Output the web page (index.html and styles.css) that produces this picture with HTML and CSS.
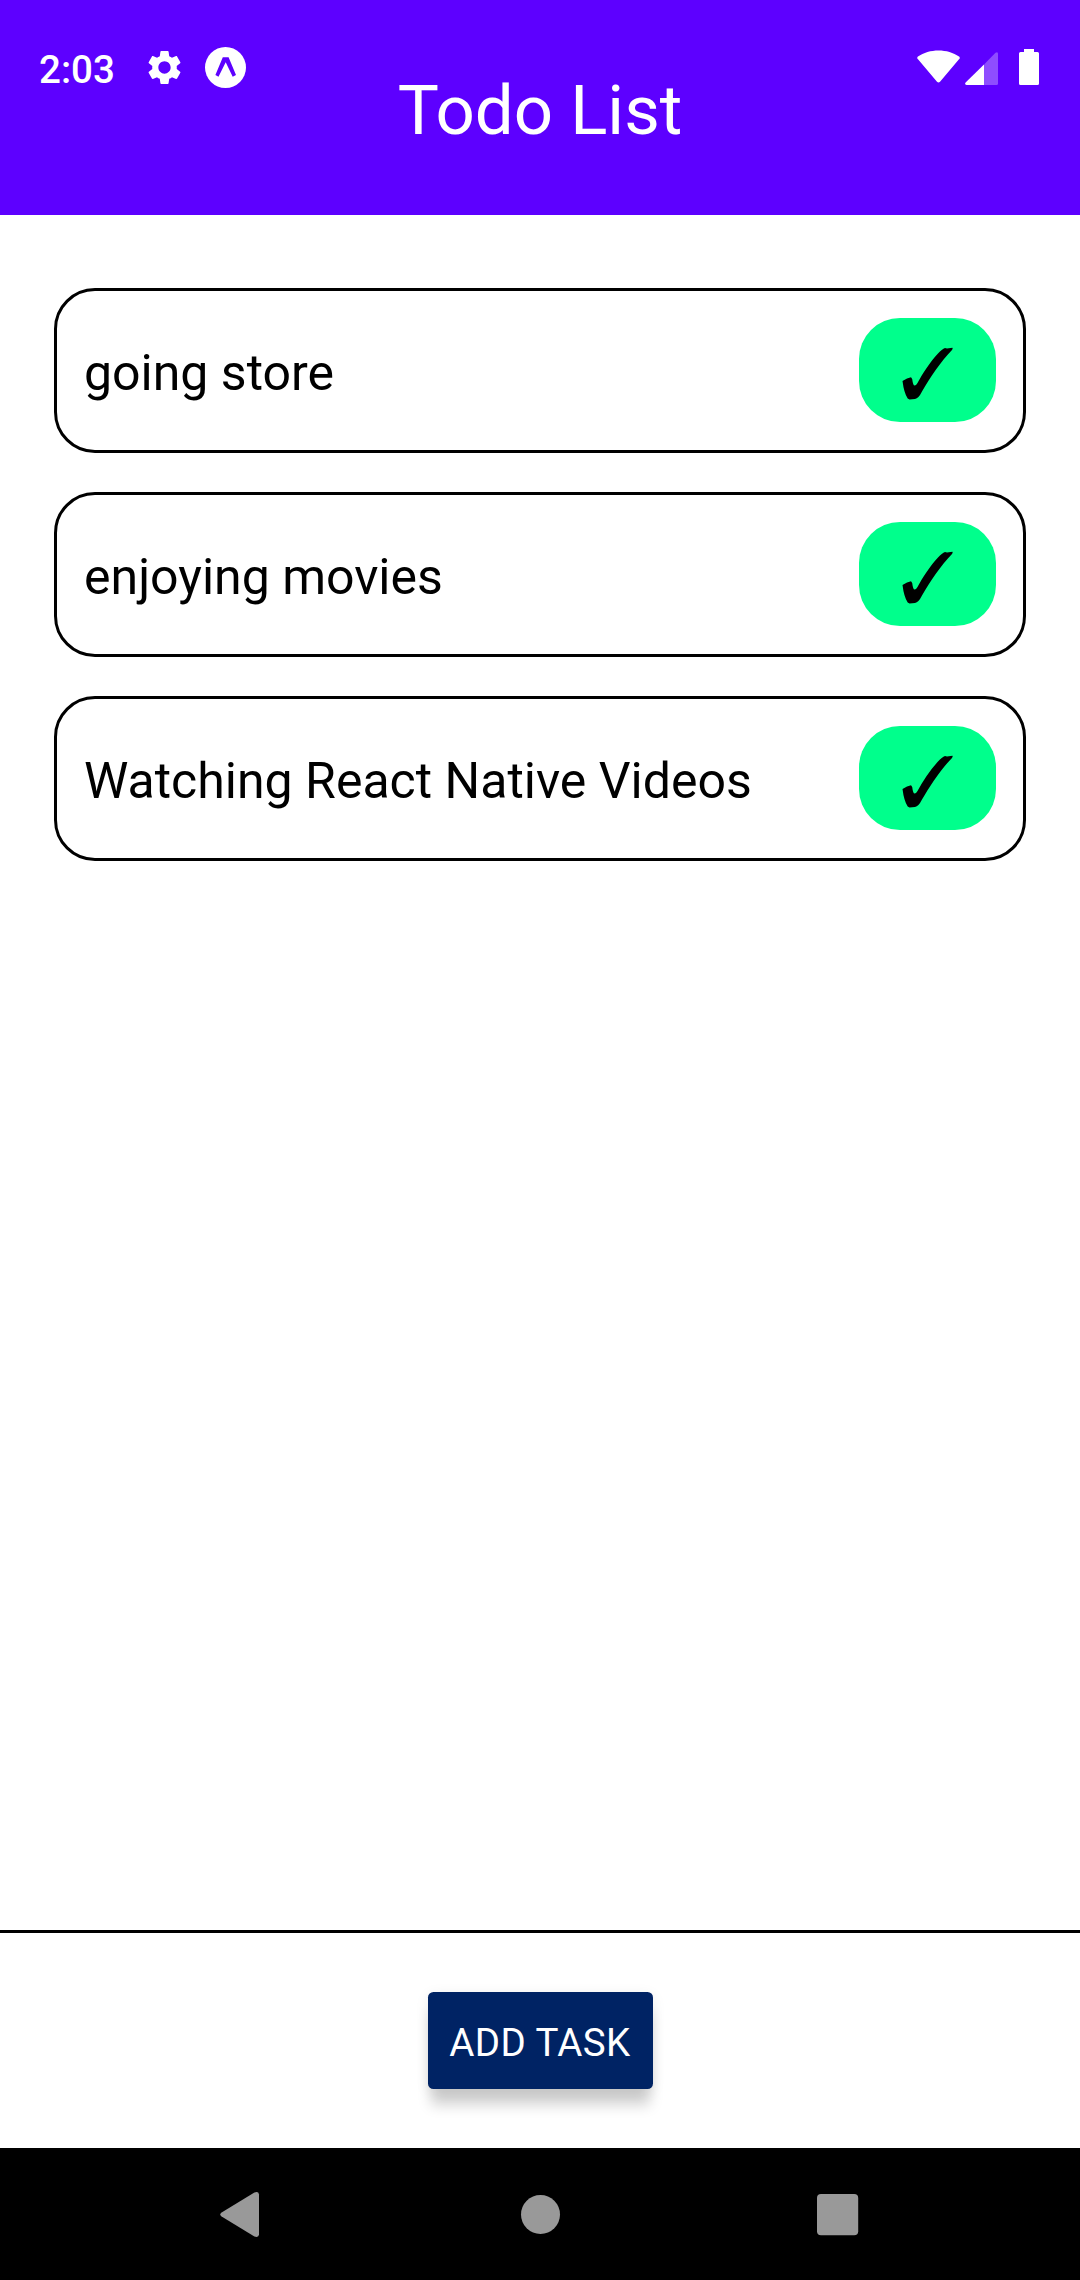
FILE: index.html
```html
<!DOCTYPE html>
<html lang="en">
<head>
<meta charset="utf-8">
<title>Todo List</title>
<link rel="stylesheet" href="styles.css">
</head>
<body>
<svg width="0" height="0" class="defs" aria-hidden="true">
  <symbol id="check" viewBox="0 0 52 54">
    <path d="M0.5 34 L5 31.5 L9 30.3 L10.2 32 Q11 38.5 12.6 38.6 Q14 38.6 15.5 36 C21 26 28 15 36 6.5 Q40 2 43 1 L45 1.6 L50.5 0.8 Q51 1.5 50 3 C39 14 28 31 20 44.5 Q16.5 51.5 13 52 L7.5 52.5 L5.7 51.6 Q2 46 0.5 34Z"/>
  </symbol>
</svg>
<header class="header">
  <div class="status">
    <div class="status-left">
      <span class="clock">2:03</span>
      <svg class="gear" viewBox="0 0 24 24"><path d="M19.14 12.94c.04-.3.06-.61.06-.94 0-.32-.02-.64-.07-.94l2.03-1.58c.18-.14.23-.41.12-.61l-1.92-3.32c-.12-.22-.37-.29-.59-.22l-2.39.96c-.5-.38-1.03-.7-1.62-.94l-.36-2.54c-.04-.24-.24-.41-.48-.41h-3.84c-.24 0-.43.17-.47.41l-.36 2.54c-.59.24-1.13.57-1.62.94l-2.39-.96c-.22-.08-.47 0-.59.22L2.74 8.87c-.12.21-.08.47.12.61l2.03 1.58c-.05.3-.09.63-.09.94s.02.64.07.94l-2.03 1.58c-.18.14-.23.41-.12.61l1.92 3.32c.12.22.37.29.59.22l2.39-.96c.5.38 1.03.7 1.62.94l.36 2.54c.05.24.24.41.48.41h3.84c.24 0 .44-.17.47-.41l.36-2.54c.59-.24 1.13-.56 1.62-.94l2.39.96c.22.08.47 0 .59-.22l1.92-3.32c.12-.22.07-.47-.12-.61l-2.01-1.58zM12 15.6c-1.98 0-3.6-1.62-3.6-3.6s1.62-3.6 3.6-3.6 3.6 1.62 3.6 3.6-1.62 3.6-3.6 3.6z"/></svg>
      <svg class="expo" viewBox="0 0 41 41"><circle cx="20.5" cy="20.5" r="20.5"/><path class="mark" d="M17.8 10.3H23.6L31 28L27.7 29.7L20.7 15.3L13.5 29.7L10.4 28Z"/></svg>
    </div>
    <div class="status-right">
      <svg class="wifi" viewBox="0 0 43 33"><path d="M1 9.3Q-.5 7.8 1 6.6C12-1.6 31-1.6 42 6.6Q43.5 7.8 42 9.3L23 31.8Q21.5 33.4 20 31.8Z"/></svg>
      <svg class="signal" viewBox="0 0 33 33"><path class="dim" d="M19 12.5L30.5 .8Q33 -.8 33 2V31.5Q33 33 31.5 33H19Z"/><path d="M19 12.5V33H1.5Q-.8 32.5 .6 30.6Z"/></svg>
      <svg class="battery" viewBox="0 0 20 36"><path d="M5 0H15V3H18.5Q20 3 20 4.5V34.5Q20 36 18.5 36H1.5Q0 36 0 34.5V4.5Q0 3 1.5 3H5Z"/></svg>
    </div>
  </div>
  <h1 class="title">Todo List</h1>
</header>
<main class="list">
  <div class="task"><span class="task-name">going store</span><button class="done" aria-label="Done"><svg class="check"><use href="#check"/></svg></button></div>
  <div class="task"><span class="task-name">enjoying movies</span><button class="done" aria-label="Done"><svg class="check"><use href="#check"/></svg></button></div>
  <div class="task"><span class="task-name">Watching React Native Videos</span><button class="done" aria-label="Done"><svg class="check"><use href="#check"/></svg></button></div>
</main>
<footer class="footer"><button class="add">ADD TASK</button></footer>
<nav class="nav">
  <svg class="nav-icon" viewBox="0 0 46 46"><path d="M1.6 20.5L34 .7Q38.5 -1.3 39 2.5V42.5Q38.5 46.3 34 44.3L1.6 24.5Q-1.1 22.5 1.6 20.5Z"/></svg>
  <svg class="nav-icon" viewBox="0 0 46 46"><circle cx="22.5" cy="22.5" r="19.5"/></svg>
  <svg class="nav-icon" viewBox="0 0 46 46"><rect x="2" y="2" width="41.2" height="41.2" rx="4"/></svg>
</nav>
</body>
</html>
```
FILE: styles.css
```css
* { box-sizing: border-box; }
body {
  margin: 0;
  height: 2280px;
  display: flex;
  flex-direction: column;
  background: #fff;
  font-family: Roboto, "Liberation Sans", sans-serif;
  color: #000;
}
svg { display: block; fill: #fff; flex: none; }
button { border: 0; padding: 0; font: inherit; }
.defs { position: absolute; }

.header { height: 215px; background: #5d00ff; display: grid; }
.status, .title { grid-area: 1 / 1; }
.status {
  height: 66px;
  margin-top: 35px;
  padding: 0 41px 0 39px;
  display: flex;
  justify-content: space-between;
}
.status-left, .status-right { display: flex; align-items: flex-start; }
.clock { width: 105px; font-size: 38.5px; font-weight: 500; line-height: 45px; padding-top: 12px; color: #fff; }
.gear { width: 41px; height: 41px; margin: 12px 20px 0 0; }
.expo { width: 41px; height: 41px; margin-top: 12px; }
.mark { fill: #5d00ff; }
.wifi { width: 43px; height: 33px; margin: 15px 5.5px 0 0; }
.signal { width: 33px; height: 33px; margin: 17px 21px 0 0; }
.dim { opacity: .3; }
.battery { width: 20px; height: 36px; margin-top: 14px; }
.title {
  margin: 71px 0 0;
  text-align: center;
  font-size: 69px;
  font-weight: 400;
  line-height: 80px;
  color: #fff;
}

.list { flex: 1; padding: 73px 54px 0; display: flex; flex-direction: column; gap: 39px; }
.task {
  height: 165px;
  padding: 27px;
  border: 3px solid #000;
  border-radius: 41px;
  display: flex;
  justify-content: space-between;
}
.task-name { font-size: 50px; line-height: 58px; padding-top: 26px; }
.done {
  width: 137px;
  height: 104px;
  border-radius: 41px;
  background: #00ff8c;
  display: flex;
  justify-content: center;
  padding-top: 29px;
}
.check { width: 52px; height: 54px; fill: #000; }

.footer { height: 218px; border-top: 3px solid #000; padding-top: 59px; display: flex; justify-content: center; align-items: flex-start; }
.add {
  width: 225px;
  height: 97px;
  border-radius: 5.5px;
  background: #002364;
  color: #fff;
  font-size: 38.5px;
  letter-spacing: .4px;
  line-height: 45px;
  padding-top: 4px;
  box-shadow: 0 19px 14px -3px rgba(0, 0, 0, .18), 0 3px 14px rgba(0, 0, 0, .08);
}
.nav { height: 132px; background: #000; padding: 1px 219px 0 220px; display: flex; justify-content: space-between; align-items: center; }
.nav-icon { width: 46px; height: 46px; fill: #999; }
```
